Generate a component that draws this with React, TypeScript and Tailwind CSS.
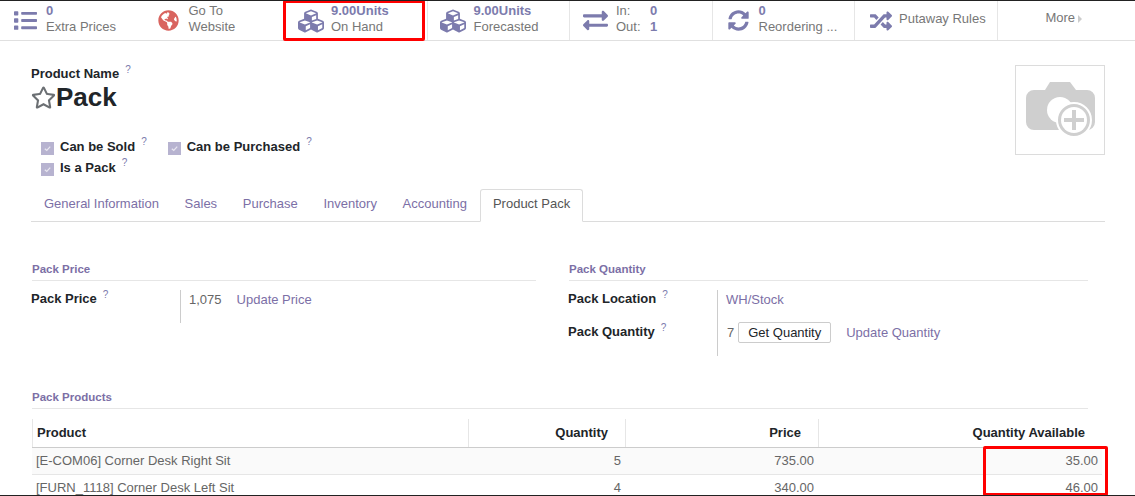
import { FaCubes, FaExchangeAlt, FaGlobeAmericas, FaList, FaRandom, FaRegStar, FaSyncAlt } from "react-icons/fa";
import type { ReactNode } from "react";

const PURPLE = "text-[#7c7bad]";

function StatButton({ icon, children, className = "" }: { icon: ReactNode; children: ReactNode; className?: string }) {
  return (
    <div className={`flex h-full w-[142.5px] shrink-0 items-center border-r border-[#e6e6e6] pl-[5px] ${className}`}>
      <span className={`flex w-[41px] shrink-0 justify-center text-[25px] ${PURPLE}`}>{icon}</span>
      <div className="mb-[4px] text-[13px] leading-[16px] text-[#777]">{children}</div>
    </div>
  );
}

function Help({ className = "" }: { className?: string }) {
  return <sup className={`ml-[6px] text-[10px] font-normal text-[#7c7bad] ${className}`}>?</sup>;
}

function Check({ label }: { label: string }) {
  return (
    <div className="flex h-[20px] items-center">
      <span className="mr-[6px] mt-[2px] flex h-[13px] w-[13px] items-center justify-center bg-[#b7b3d0]">
        <svg viewBox="0 0 10 10" className="h-[9px] w-[9px]">
          <path d="M2 5.2 4.2 7.2 8 3" fill="none" stroke="#e8e6f0" strokeWidth="1.4" />
        </svg>
      </span>
      <span className="text-[13px] font-bold text-[#212529]">{label}</span>
      <Help />
    </div>
  );
}

function SectionTitle({ children }: { children: ReactNode }) {
  return (
    <div className="ml-[1px] border-b border-[#e6e6e6] pb-[4px] text-[11.5px] font-bold leading-[14px] text-[#7c6fa6]">
      {children}
    </div>
  );
}

function Field({ label, children }: { label: string; children: ReactNode }) {
  return (
    <div className="flex">
      <div className="w-[149px] shrink-0 text-[13px] font-bold leading-[18px] text-[#212529]">
        {label}
        <Help />
      </div>
      <div className="flex h-[33px] items-start gap-[15px] border-l border-[#ccc] pl-[8px] text-[13px] leading-[18px] text-[#666]">
        {children}
      </div>
    </div>
  );
}

const rows = [
  { product: "[E-COM06] Corner Desk Right Sit", qty: "5", price: "735.00", avail: "35.00" },
  { product: "[FURN_1118] Corner Desk Left Sit", qty: "4", price: "340.00", avail: "46.00" },
];

export default function App() {
  return (
    <div className="relative h-[496px] w-[1135px] overflow-hidden border-b border-t border-b-[#222] border-t-[#222] bg-white font-['Liberation_Sans',sans-serif]">
      {/* button box */}
      <div className="flex h-[40px] border-b border-[#e0e0e0]">
        <StatButton icon={<FaList className="text-[23px]" />} className="w-[141px] border-r-0">
          <div className={`font-bold ${PURPLE}`}>0</div>
          <div>Extra Prices</div>
        </StatButton>
        <StatButton icon={<FaGlobeAmericas className="text-[21px] text-[#d9645f]" />}>
          <div>Go To</div>
          <div>Website</div>
        </StatButton>
        <StatButton icon={<FaCubes className="text-[26px]" />}>
          <div className={`font-bold ${PURPLE}`}>9.00Units</div>
          <div>On Hand</div>
        </StatButton>
        <StatButton icon={<FaCubes className="text-[26px]" />}>
          <div className={`font-bold ${PURPLE}`}>9.00Units</div>
          <div>Forecasted</div>
        </StatButton>
        <StatButton icon={<FaExchangeAlt />}>
          <div className="grid grid-cols-[34px_auto]">
            <span>In:</span>
            <span className={`font-bold ${PURPLE}`}>0</span>
            <span>Out:</span>
            <span className={`font-bold ${PURPLE}`}>1</span>
          </div>
        </StatButton>
        <StatButton icon={<FaSyncAlt className="text-[21px]" />}>
          <div className={`font-bold ${PURPLE}`}>0</div>
          <div>Reordering ...</div>
        </StatButton>
        <StatButton icon={<FaRandom className="text-[22px]" />}>
          <div className="ml-[-2px]">Putaway Rules</div>
        </StatButton>
        <div className="flex h-full flex-1 items-start justify-center pr-[5px] pt-[9px] text-[13px] leading-[16px] text-[#777]">
          More
          <span className="ml-[3px] mt-[5px] h-0 w-0 border-y-[4px] border-l-[4px] border-y-transparent border-l-[#ccc]" />
        </div>
      </div>

      {/* sheet */}
      <div className="px-[31px]">
        <div className="flex justify-between">
          <div>
            <div className="mt-[23px] text-[13px] font-bold leading-[20px] text-[#212529]">
              Product Name
              <Help />
            </div>
            <div className="flex h-[26px] items-center">
              <FaRegStar className="h-[25px] w-[25px] text-[#6b6f73]" />
              <span className="text-[26px] font-bold leading-[30px] text-[#212529]">Pack</span>
            </div>
            <div className="ml-[10px] mt-[27px] w-[300px]">
              <div className="flex gap-[21px]">
                <Check label="Can be Sold" />
                <Check label="Can be Purchased" />
              </div>
              <div className="mt-[1px]">
                <Check label="Is a Pack" />
              </div>
            </div>
          </div>
          <div className="mr-[-1px] mt-[24px] flex h-[90px] w-[90px] items-center justify-center border border-[#dcdcdc]">
            <svg viewBox="0 0 70 56" className="ml-[2px] h-[58px] w-[70px]">
              <path
                d="M8 8h11l5-8h20l6 8h11a8 8 0 0 1 8 8v24a8 8 0 0 1-8 8H8a8 8 0 0 1-8-8V16a8 8 0 0 1 8-8z"
                fill="#cfcfcf"
              />
              <circle cx="34" cy="28" r="13" fill="#fff" />
              <circle cx="48" cy="38" r="17" fill="#cfcfcf" stroke="#fff" strokeWidth="2" />
              <circle cx="48" cy="38" r="13" fill="#fff" />
              <path d="M48 28v20M38 38h20" stroke="#cfcfcf" strokeWidth="4" />
            </svg>
          </div>
        </div>

        {/* tabs */}
        <div className="mr-[-1px] mt-[11px] flex h-[33px] items-end border-b border-[#dcdcdc] text-[13px] text-[#7c6fa6]">
          <div className="mb-[-1px] flex h-[33px] items-center gap-[25.7px] pb-[3px] pl-[13px]">
            <span>General Information</span>
            <span>Sales</span>
            <span>Purchase</span>
            <span>Inventory</span>
            <span>Accounting</span>
          </div>
          <div className="mb-[-1px] ml-[13px] flex h-[33px] items-center rounded-t-[3px] border border-[#dcdcdc] border-b-white bg-white px-[12px] pb-[3px] text-[#555]">
            Product Pack
          </div>
        </div>

        {/* groups */}
        <div className="mt-[40px] flex">
          <div className="w-[505px]">
            <SectionTitle>Pack Price</SectionTitle>
            <div className="mt-[9px]">
              <Field label="Pack Price">
                <span className="mt-[1px]">1,075</span>
                <span className="mt-[1px] text-[#7c6fa6]">Update Price</span>
              </Field>
            </div>
          </div>
          <div className="ml-[32px] w-[520px]">
            <SectionTitle>Pack Quantity</SectionTitle>
            <div className="mt-[9px]">
              <Field label="Pack Location">
                <span className="mt-[1px] text-[#7c6fa6]">WH/Stock</span>
              </Field>
              <Field label="Pack Quantity">
                <div className="ml-[1px] mt-[-1px] flex items-center gap-[15px]">
                  <span className="flex items-center gap-[4px]">
                    7
                    <span className="rounded-[2px] border border-[#ccc] px-[9px] text-[13px] leading-[19px] text-[#212529]">
                      Get Quantity
                    </span>
                  </span>
                  <span className="text-[#7c6fa6]">Update Quantity</span>
                </div>
              </Field>
            </div>
          </div>
        </div>

        {/* pack products */}
        <div className="mt-[34px] w-[1057px]">
          <SectionTitle>Pack Products</SectionTitle>
          <div className="ml-[1px] mt-[10px] h-[100px] w-[1073px]">
            <div className="flex h-[29px] items-center border-b border-[#ccc] text-[13px] font-bold text-[#212529]">
              <div className="h-full w-[437px] border-l border-r border-[#e6e6e6] pl-[4px] leading-[28px]">Product</div>
              <div className="h-full w-[157px] border-r border-[#e6e6e6] pr-[17px] text-right leading-[28px]">Quantity</div>
              <div className="h-full w-[193px] border-r border-[#e6e6e6] pr-[17px] text-right leading-[28px]">Price</div>
              <div className="w-[269px] pr-[3px] text-right">Quantity Available</div>
            </div>
            {rows.map((r, i) => (
              <div
                key={r.product}
                className={`flex h-[27px] w-[1070px] items-center border-b border-[#e6e6e6] text-[13px] text-[#666] ${i === 0 ? "bg-[#fafafa]" : ""}`}
              >
                <div className="w-[437px] pl-[4px]">{r.product}</div>
                <div className="w-[152px] text-right">{r.qty}</div>
                <div className="w-[193px] text-right">{r.price}</div>
                <div className="w-[284px] text-right">{r.avail}</div>
              </div>
            ))}
          </div>
        </div>
      </div>

      {/* red highlight boxes over the page */}
      <div className="absolute left-[283px] top-[-1px] h-[41px] w-[142px] rounded-[2px] border-[3px] border-[#f00]" />
      <div className="absolute left-[983px] top-[445px] h-[50px] w-[125px] rounded-[2px] border-[3px] border-[#f00]" />
    </div>
  );
}
